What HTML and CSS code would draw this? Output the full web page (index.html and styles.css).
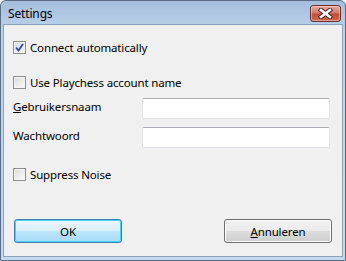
FILE: index.html
```html
<!DOCTYPE html>
<html>
<head>
  <title>Settings</title>
  <link rel="stylesheet" href="styles.css">
</head>
<body>
  <div class="window">
    <div class="titlebar">
      <span class="title">Settings</span>
      <button class="close-btn" aria-label="Close">
        <svg width="15" height="11" viewBox="0 0 15 11">
          <path d="M3 2 L12 9 M12 2 L3 9" stroke="#3d2626" stroke-width="4.4" stroke-linecap="square"/>
          <path d="M3 2 L12 9 M12 2 L3 9" stroke="#ffffff" stroke-width="2.6" stroke-linecap="square"/>
        </svg>
      </button>
    </div>

    <div class="panel">
      <label class="check-row row-connect">
        <span class="checkbox checked">
          <svg width="9" height="9" viewBox="0 0 9 9">
            <path d="M1 4.5 L3.5 7.5 L8 1" fill="none" stroke="#3349a8" stroke-width="1.8"/>
          </svg>
        </span>
        Connect automatically
      </label>

      <label class="check-row row-account">
        <span class="checkbox"></span>
        Use Playchess account name
      </label>

      <div class="field-row row-user">
        <span class="field-label"><u>G</u>ebruikersnaam</span>
        <input class="textbox" type="text">
      </div>

      <div class="field-row row-pass">
        <span class="field-label">Wachtwoord</span>
        <input class="textbox" type="password">
      </div>

      <label class="check-row row-noise">
        <span class="checkbox"></span>
        Suppress Noise
      </label>

      <div class="buttons">
        <button class="btn btn-default">OK</button>
        <button class="btn"><u>A</u>nnuleren</button>
      </div>
    </div>
  </div>
</body>
</html>
```

FILE: styles.css
```css
body {
  margin: 0;
  padding: 0;
  font-family: "Noto Sans", "Open Sans", sans-serif;
  font-size: 11.5px;
  letter-spacing: -0.15px;
  color: #000;
  background-color: #fff;
}

.window {
  box-sizing: border-box;
  width: 346px;
  height: 261px;
  border: 1px solid #5b6d84;
  border-radius: 6px 6px 0 0;
  background: linear-gradient(#a4bedc, #bcd2ea 30px, #c4d8ee);
  padding: 0 2px 3px 2px;
  display: flex;
  flex-direction: column;
}

.titlebar {
  height: 23px;
  display: flex;
  align-items: flex-start;
  justify-content: space-between;
}

.title {
  margin-left: 5px;
  margin-top: 4px;
  line-height: 18px;
  font-size: 12px;
}

.close-btn {
  margin-top: 4px;
  margin-right: 2px;
  width: 31px;
  height: 17px;
  padding: 0;
  border: 1px solid #6b2f2f;
  border-radius: 3px;
  background: linear-gradient(#e8a99b, #d27a68 45%, #c14c36 55%, #cf6a50);
  display: flex;
  align-items: center;
  justify-content: center;
  box-shadow: inset 0 0 0 1px rgba(255, 220, 210, 0.5);
}

.panel {
  flex-grow: 1;
  background-color: #f0f0f0;
  border: 1px solid #8da2bd;
  padding: 16px 10px 0 9px;
  display: flex;
  flex-direction: column;
}

.check-row {
  display: flex;
  align-items: center;
  height: 13px;
  line-height: 13px;
}

.checkbox {
  box-sizing: border-box;
  width: 13px;
  height: 13px;
  border: 1px solid #8e8f8f;
  background: linear-gradient(135deg, #dcdcdc, #fbfbfb);
  box-shadow: inset 0 0 0 1px #f4f4f4;
  margin-right: 4px;
  display: flex;
  align-items: center;
  justify-content: center;
}

.checkbox.checked {
  background: linear-gradient(135deg, #d6dce6, #f6f8fb);
}

.row-account {
  margin-top: 22px;
}

.field-row {
  display: flex;
  align-items: center;
  height: 21px;
}

.row-user {
  margin-top: 9px;
}

.row-pass {
  margin-top: 8px;
}

.field-label {
  width: 129px;
  margin-top: -4px;
}

.textbox {
  box-sizing: border-box;
  width: 188px;
  height: 21px;
  margin: 0;
  border: 1px solid #e2e3ea;
  border-top-color: #abadb3;
  border-radius: 2px;
  background-color: #fff;
}

.row-noise {
  margin-top: 20px;
}

.buttons {
  margin-top: 38px;
  display: flex;
  justify-content: space-between;
  padding-left: 1px;
}

.btn {
  box-sizing: border-box;
  width: 108px;
  height: 24px;
  padding: 0;
  font-family: inherit;
  font-size: 11.5px;
  letter-spacing: -0.15px;
  color: #000;
  border: 1px solid #707070;
  border-radius: 3px;
  background: linear-gradient(#f2f2f2, #ebebeb 50%, #dddddd 50%, #cfcfcf);
  box-shadow: inset 0 0 0 1px #fcfcfc;
}

.btn-default {
  border-color: #3c7fb1;
  background: linear-gradient(#eaf6fd, #d9f0fc 50%, #bee6fd 50%, #a7d9f5);
  box-shadow: inset 0 0 0 1px #48d2f7;
}
```
